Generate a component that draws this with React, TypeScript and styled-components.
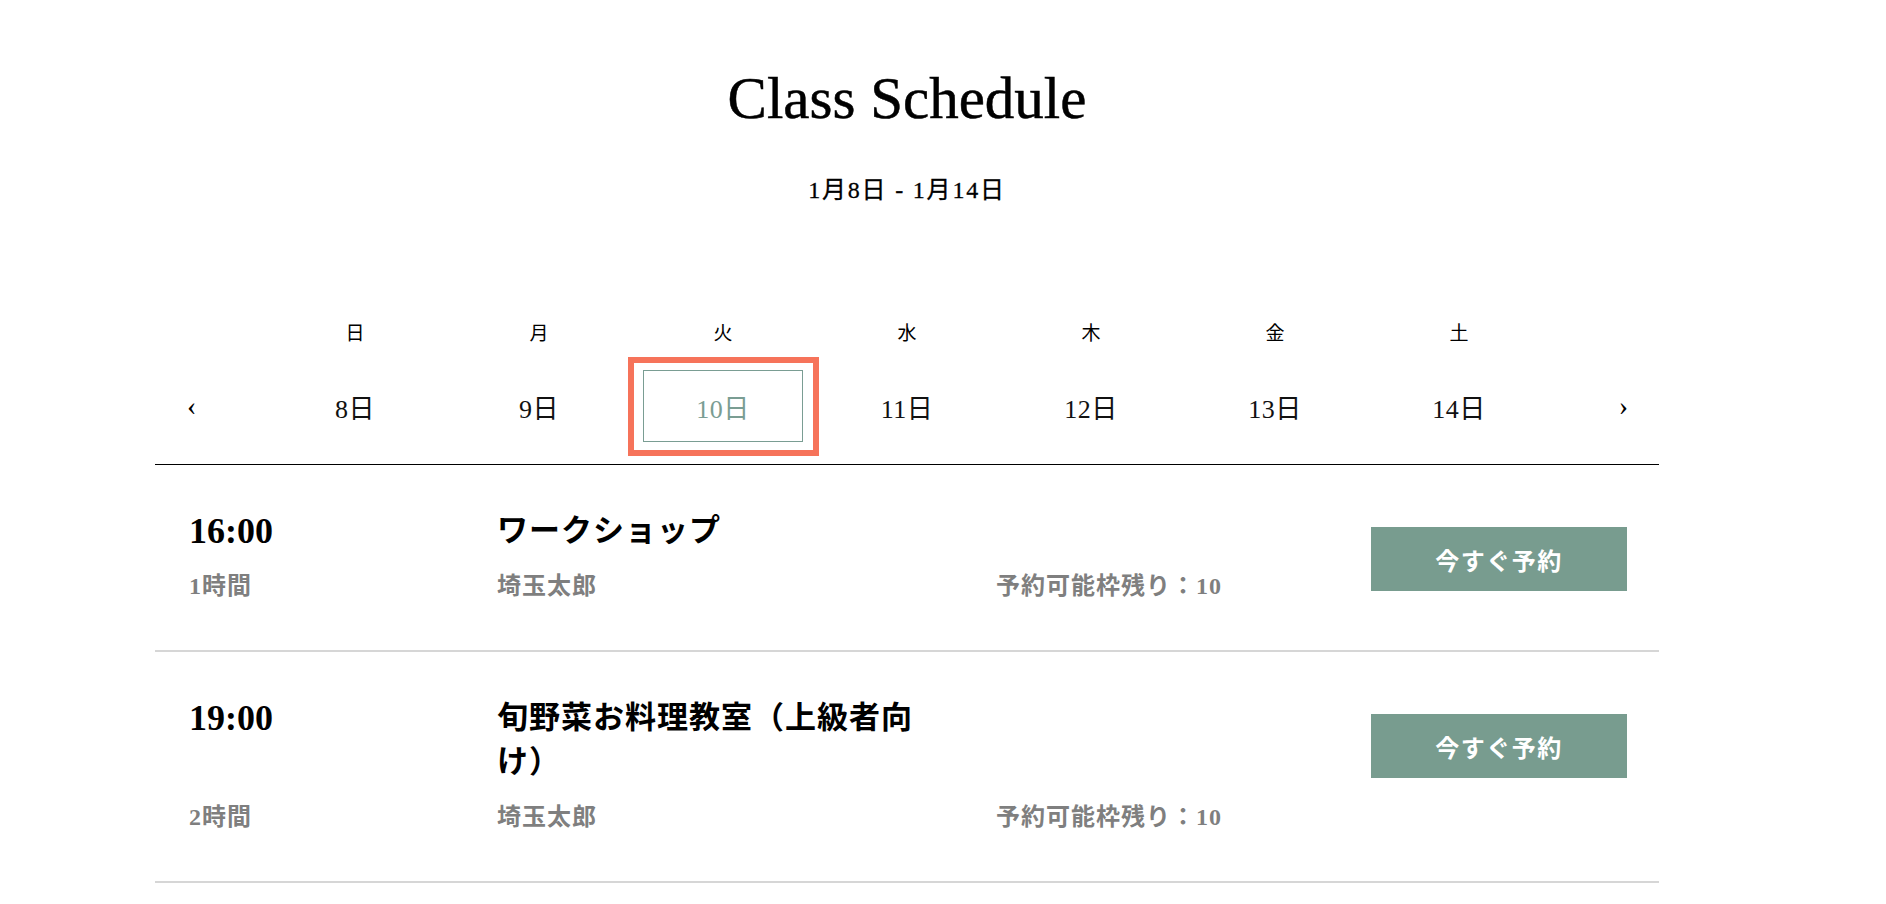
import React from "react";
import styled, { createGlobalStyle } from "styled-components";

const GlobalStyle = createGlobalStyle`
  html, body {
    margin: 0;
    padding: 0;
    background: #ffffff;
  }
  body {
    font-family: "Liberation Serif", "Noto Sans CJK JP", serif;
    color: #000000;
  }
  * { box-sizing: border-box; }
`;

const Page = styled.main`
  width: 1504px;
  margin-left: 155px;
  padding-top: 65px;
`;

const Heading = styled.h1`
  margin: 0;
  text-align: center;
  font-size: 59px;
  line-height: 66px;
  font-weight: 400;
  -webkit-text-stroke: 0.5px #000000;
`;

const RangeText = styled.p`
  margin: 44px 0 0;
  text-align: center;
  font-size: 24px;
  line-height: 30px;
  letter-spacing: 1.8px;
  -webkit-text-stroke: 0.3px #000000;
`;

const WeekNav = styled.nav`
  margin-top: 114px;
  display: flex;
  align-items: flex-end;
  padding-bottom: 22px;
  border-bottom: 1px solid #000000;
`;

const ArrowCell = styled.div<{ $side: "left" | "right" }>`
  width: 108px;
  height: 72px;
  display: flex;
  align-items: center;
  justify-content: ${(p) => (p.$side === "left" ? "flex-start" : "flex-end")};
  padding: ${(p) => (p.$side === "left" ? "0 0 0 32px" : "0 31px 0 0")};
`;

const ArrowButton = styled.button`
  background: none;
  border: 0;
  padding: 0;
  font-family: inherit;
  font-size: 28px;
  line-height: 1;
  color: #000000;
  cursor: pointer;
`;

const DayColumn = styled.div`
  width: 184px;
  display: flex;
  flex-direction: column;
  align-items: center;
  gap: 21px;
`;

const DayLabel = styled.span`
  font-size: 19px;
  line-height: 30px;
`;

const DateButton = styled.button<{ $active?: boolean }>`
  position: relative;
  width: 160px;
  height: 72px;
  display: flex;
  align-items: center;
  justify-content: center;
  background: none;
  padding: 0;
  font-family: inherit;
  font-size: 26px;
  letter-spacing: 0.5px;
  color: ${(p) => (p.$active ? "#7a9d93" : "#111111")};
  border: 1px solid ${(p) => (p.$active ? "#7a9d93" : "transparent")};
  cursor: pointer;

  ${(p) =>
    p.$active &&
    `
    &::after {
      content: "";
      position: absolute;
      top: -14px;
      left: -16px;
      right: -17px;
      bottom: -15px;
      border: 6px solid #f6735a;
      pointer-events: none;
    }
  `}
`;

const ScheduleRow = styled.section`
  display: grid;
  grid-template-columns: 308px 499px 1fr 256px;
  grid-template-areas:
    "time title . book"
    "dur teacher slots book";
  row-gap: 15px;
  padding: 44px 32px 46px 34px;
  border-bottom: 2px solid #d6d6d6;
`;

const Time = styled.div`
  grid-area: time;
  font-size: 36px;
  line-height: 44px;
  font-weight: 700;
`;

const ClassTitle = styled.h2`
  grid-area: title;
  margin: 0;
  max-width: 430px;
  font-size: 31px;
  line-height: 44px;
  font-weight: 700;
  letter-spacing: 1px;
`;

const Meta = styled.div<{ $area: string }>`
  grid-area: ${(p) => p.$area};
  font-size: 24px;
  line-height: 36px;
  font-weight: 700;
  letter-spacing: 1px;
  color: #7f7f7f;
`;

const BookButton = styled.button`
  grid-area: book;
  align-self: start;
  margin-top: 18px;
  width: 256px;
  height: 64px;
  border: 0;
  background: #789c8f;
  color: #ffffff;
  font-family: inherit;
  font-size: 24px;
  font-weight: 700;
  letter-spacing: 1.5px;
  cursor: pointer;
`;

const days = [
  { label: "日", date: "8日" },
  { label: "月", date: "9日" },
  { label: "火", date: "10日", active: true },
  { label: "水", date: "11日" },
  { label: "木", date: "12日" },
  { label: "金", date: "13日" },
  { label: "土", date: "14日" },
];

const classes = [
  {
    time: "16:00",
    title: "ワークショップ",
    duration: "1時間",
    teacher: "埼玉太郎",
    slots: "予約可能枠残り：10",
  },
  {
    time: "19:00",
    title: "旬野菜お料理教室（上級者向け）",
    duration: "2時間",
    teacher: "埼玉太郎",
    slots: "予約可能枠残り：10",
  },
];

export default function App() {
  return (
    <>
      <GlobalStyle />
      <Page>
        <Heading>Class Schedule</Heading>
        <RangeText>1月8日 - 1月14日</RangeText>
        <WeekNav>
          <ArrowCell $side="left">
            <ArrowButton aria-label="前の週">‹</ArrowButton>
          </ArrowCell>
          {days.map((d) => (
            <DayColumn key={d.date}>
              <DayLabel>{d.label}</DayLabel>
              <DateButton $active={d.active}>{d.date}</DateButton>
            </DayColumn>
          ))}
          <ArrowCell $side="right">
            <ArrowButton aria-label="次の週">›</ArrowButton>
          </ArrowCell>
        </WeekNav>
        {classes.map((c) => (
          <ScheduleRow key={c.time}>
            <Time>{c.time}</Time>
            <ClassTitle>{c.title}</ClassTitle>
            <Meta $area="dur">{c.duration}</Meta>
            <Meta $area="teacher">{c.teacher}</Meta>
            <Meta $area="slots">{c.slots}</Meta>
            <BookButton>今すぐ予約</BookButton>
          </ScheduleRow>
        ))}
      </Page>
    </>
  );
}
